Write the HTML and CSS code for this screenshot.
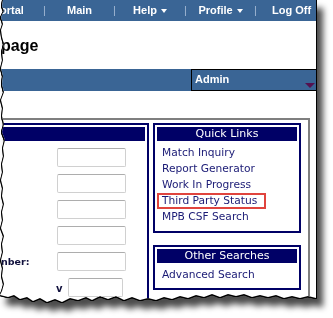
FILE: index.html
```html
<!DOCTYPE html>
<html lang="en">
<head>
  <meta charset="UTF-8" />
  <title>Home page</title>
  <link rel="stylesheet" href="styles.css">
</head>
<body>
  <div class="sheet">
    <div class="page">
      <div class="topnav">
        <span class="nav-item first">ortal</span>
        <span class="sep">|</span>
        <span class="nav-item">Main</span>
        <span class="sep">|</span>
        <span class="nav-item wide">Help<svg class="caret" width="6" height="4" viewBox="0 0 6 4"><polygon points="0,0 6,0 3,4" /></svg></span>
        <span class="sep">|</span>
        <span class="nav-item">Profile<svg class="caret" width="6" height="4" viewBox="0 0 6 4"><polygon points="0,0 6,0 3,4" /></svg></span>
        <span class="sep">|</span>
        <span class="nav-item last">Log Off</span>
      </div>

      <div class="title-row">
        <h1>page</h1>
      </div>

      <div class="subbar">
        <div class="admin">
          Admin
          <svg class="admin-caret" width="10" height="5" viewBox="0 0 10 5"><polygon points="0,0 10,0 5,5" /></svg>
        </div>
      </div>

      <div class="content">
        <div class="form-box">
          <div class="box-head"></div>
          <div class="form-rows">
            <span class="label"></span><span class="field"><input type="text" /></span>
            <span class="label"></span><span class="field"><input type="text" /></span>
            <span class="label"></span><span class="field"><input type="text" /></span>
            <span class="label"></span><span class="field"><input type="text" /></span>
            <span class="label">nber:</span><span class="field"><input type="text" /></span>
            <span class="label"></span>
            <span class="field range">
              <span class="range-sep">v</span>
              <input type="text" class="short" />
            </span>
          </div>
        </div>

        <div class="side">
          <div class="box">
            <div class="box-head">Quick Links</div>
            <ul class="links">
              <li><a href="#">Match Inquiry</a></li>
              <li><a href="#">Report Generator</a></li>
              <li><a href="#">Work In Progress</a></li>
              <li><a href="#" class="hl">Third Party Status</a></li>
              <li><a href="#">MPB CSF Search</a></li>
            </ul>
          </div>
          <div class="box">
            <div class="box-head">Other Searches</div>
            <ul class="links last">
              <li><a href="#">Advanced Search</a></li>
            </ul>
          </div>
        </div>
      </div>
    </div>
  </div>
</body>
</html>
```

FILE: styles.css
```css
body {
  margin: 0;
  background: #ffffff;
}

/* torn screenshot look: clipped sheet with outline and drop shadow */
.sheet {
  width: 316px;
  height: 318px;
  filter: drop-shadow(1px 0 0 #000) drop-shadow(-1px 0 0 #000) drop-shadow(0 1px 0 #000) drop-shadow(6px 8px 3px rgba(0, 0, 0, 0.7));
}

.page {
  height: 318px;
  background: #ffffff;
  overflow: hidden;
  display: flex;
  flex-direction: column;
  font-family: "Liberation Sans", Arial, sans-serif;
  clip-path: polygon(3px 0, 2px 6px, 4px 11px, 1px 17px, 3px 24px, 1px 30px, 2px 37px, 4px 44px, 2px 52px, 3px 60px, 1px 68px, 3px 76px, 2px 84px, 4px 92px, 1px 100px, 3px 108px, 2px 116px, 4px 124px, 2px 132px, 5px 140px, 3px 148px, 4px 156px, 2px 164px, 3px 172px, 1px 180px, 3px 188px, 2px 196px, 4px 204px, 2px 212px, 3px 220px, 1px 228px, 4px 236px, 2px 244px, 3px 252px, 1px 260px, 3px 268px, 2px 276px, 4px 284px, 2px 291px, 0 295px, 8px 297px, 14px 295px, 20px 299px, 27px 297px, 33px 301px, 40px 298px, 47px 302px, 55px 299px, 62px 302px, 70px 298px, 78px 300px, 86px 297px, 92px 300px, 100px 296px, 108px 299px, 116px 296px, 124px 300px, 132px 297px, 140px 300px, 148px 298px, 156px 300px, 164px 297px, 172px 299px, 180px 296px, 188px 298px, 196px 295px, 204px 297px, 212px 294px, 220px 297px, 228px 294px, 236px 296px, 244px 294px, 252px 297px, 260px 295px, 268px 297px, 276px 295px, 284px 298px, 292px 296px, 300px 298px, 308px 296px, 316px 298px, 316px 0);
}

.topnav {
  display: flex;
  flex: none;
  height: 21px;
  background: #3a6595;
  color: #ffffff;
  font: bold 11px/20px "Liberation Sans", Arial, sans-serif;
  white-space: nowrap;
}

.nav-item {
  flex: none;
  width: 67px;
  text-align: center;
}

.nav-item.first {
  width: 43px;
  text-align: left;
}

.nav-item.wide {
  width: 68px;
}

.nav-item.last {
  width: auto;
  padding-left: 15px;
}

.sep {
  flex: none;
  width: 3px;
  text-align: center;
  font-weight: normal;
  color: #a3b8d4;
}

.caret {
  margin-left: 4px;
  vertical-align: middle;
  fill: #ffffff;
}

.title-row {
  flex: none;
  height: 48px;
  padding-top: 15px;
  box-sizing: border-box;
}

h1 {
  margin: 0 0 0 1px;
  font-size: 16px;
  line-height: 20px;
  color: #000000;
}

.subbar {
  flex: none;
  display: flex;
  height: 22px;
  background: #3a6595;
}

.admin {
  position: relative;
  margin-left: auto;
  width: 125px;
  box-sizing: border-box;
  border: 1px solid #000000;
  border-right: none;
  padding-left: 3px;
  color: #ffffff;
  font-weight: bold;
  font-size: 11px;
  line-height: 19px;
}

.admin-caret {
  position: absolute;
  right: 1px;
  bottom: 2px;
  fill: #55114f;
}

.content {
  flex: 1;
  display: flex;
  gap: 4px;
  width: 310px;
  box-sizing: border-box;
  margin-top: 27px;
  padding: 3px 7px 0 0;
  border-top: 2px solid #7f7f7f;
  border-right: 2px solid #7f7f7f;
  font-family: "DejaVu Sans", Verdana, sans-serif;
}

.form-box {
  width: 149px;
  box-sizing: border-box;
  border: 2px solid #000066;
  border-left: none;
  padding: 2px 2px 0 0;
}

.box-head {
  height: 14px;
  background: #000066;
  color: #ffffff;
  font-size: 11px;
  line-height: 14px;
  text-align: center;
}

.form-rows {
  display: grid;
  grid-template-columns: 34px auto;
  grid-auto-rows: 19px;
  column-gap: 22px;
  row-gap: 7px;
  padding-top: 7px;
}

.label {
  white-space: nowrap;
  padding-left: 1px;
  font-size: 9.5px;
  font-weight: bold;
  line-height: 19px;
  color: #10103c;
}

.field input {
  display: block;
  width: 69px;
  height: 19px;
  box-sizing: border-box;
  margin: 0 0 0 1px;
  padding: 0;
  border: 1px solid #d0d0d0;
  border-top-color: #adadad;
  border-radius: 2px;
  background: #ffffff;
}

.range {
  display: flex;
  align-items: flex-end;
  gap: 5px;
}

.range-sep {
  font-size: 10px;
  font-weight: bold;
  line-height: 12px;
  margin-bottom: 2px;
  color: #10103c;
}

.field input.short {
  width: 55px;
  margin: 0;
}

.side {
  width: 148px;
  display: flex;
  flex-direction: column;
  gap: 12px;
  align-self: flex-start;
}

.box {
  border: 2px solid #000066;
  padding: 2px;
}

.links {
  list-style: none;
  margin: 0;
  padding: 4px 0 4px 5px;
  font-size: 10.67px;
  line-height: 16px;
}

.links.last {
  padding-bottom: 3px;
}

.links li {
  height: 16px;
}

.links a {
  color: #1a1a75;
  text-decoration: none;
}

.links a.hl {
  display: inline-block;
  vertical-align: top;
  height: 16px;
  box-sizing: border-box;
  margin-left: -5px;
  padding: 0 7px 0 3px;
  border: 2px solid #e0443e;
  line-height: 12px;
}
```
